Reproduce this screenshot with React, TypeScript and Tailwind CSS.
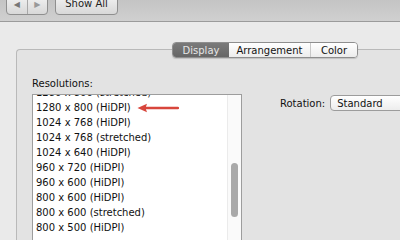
import React from 'react';

const resolutions = [
  '1280 x 800 (stretched)',
  '1280 x 800 (HiDPI)',
  '1024 x 768 (HiDPI)',
  '1024 x 768 (stretched)',
  '1024 x 640 (HiDPI)',
  '960 x 720 (HiDPI)',
  '960 x 600 (HiDPI)',
  '800 x 600 (HiDPI)',
  '800 x 600 (stretched)',
  '800 x 500 (HiDPI)',
];

function RedArrow() {
  return (
    <svg width="42" height="10" viewBox="0 0 42 10" className="ml-[6px] shrink-0">
      <path d="M8 5 H41" stroke="#d8463c" strokeWidth="2.4" strokeLinecap="round" />
      <path d="M0.5 5 L10 0.8 L8.5 5 L10 9.2 Z" fill="#d8463c" />
    </svg>
  );
}

export default function App() {
  return (
    <div className="w-[400px] h-[240px] overflow-hidden bg-[#eaeaea] text-[10px] text-[#111] font-['DejaVu_Sans',sans-serif]">
      {/* toolbar */}
      <div className="h-[22px] flex items-end pb-[6px] bg-gradient-to-b from-[#c4c4c4] to-[#d0d0d0] border-b border-[#9b9b9b]">
        <div className="ml-[6px] w-[42px] h-[20px] flex rounded-[4px] border border-[#8f8f8f] bg-gradient-to-b from-[#f2f2f2] to-[#d8d8d8] text-[#777] text-[8px]">
          <div className="flex-1 flex items-end justify-center pb-[3px] border-r border-[#a8a8a8]">◀</div>
          <div className="flex-1 flex items-end justify-center pb-[3px] text-[#999]">▶</div>
        </div>
        <div className="ml-[7px] w-[63px] h-[20px] flex items-end justify-center pb-[3px] rounded-[4px] border border-[#8f8f8f] bg-gradient-to-b from-[#f2f2f2] to-[#d8d8d8] text-[10px] text-[#222]">
          Show All
        </div>
      </div>

      {/* tabs + panel */}
      <div className="pt-[20px]">
        <div className="relative z-10 ml-[172px] flex h-[16px] w-[186px] rounded-[4px] border border-[#8e8e8e] overflow-hidden shadow-[0_1px_1px_rgba(0,0,0,0.15)]">
          <div className="w-[56px] flex items-center justify-center bg-gradient-to-b from-[#7a7a7a] to-[#666] text-[#e6e6e6]">Display</div>
          <div className="w-[82px] flex items-center justify-center bg-gradient-to-b from-[#ffffff] to-[#ececec] border-r border-[#c8c8c8]">Arrangement</div>
          <div className="flex-1 flex items-center justify-center bg-gradient-to-b from-[#ffffff] to-[#ececec]">Color</div>
        </div>

        <div className="-mt-[9px] ml-[16px] h-[200px] rounded-tl-[4px] border-t border-l border-[#b9b9b9] bg-[#e3e3e3] flex overflow-hidden">
          <div className="shrink-0 pl-[15px] pt-[27px] flex flex-col">
            <div className="leading-[13px]">Resolutions:</div>
            <div className="mt-[4px] w-[210px] h-[160px] border border-[#9d9d9d] bg-white flex overflow-hidden">
              <div className="flex-1 flex flex-col pl-[3px] -mt-[10px]">
                {resolutions.map((r, i) => (
                  <div key={r} className="h-[15px] flex items-center whitespace-nowrap">
                    {r}
                    {i === 1 && <RedArrow />}
                  </div>
                ))}
              </div>
              <div className="w-[14px] border-l border-[#ebebeb] bg-[#fafafa] flex justify-center">
                <div className="mt-[68px] w-[7px] h-[54px] rounded-full bg-[#a9a9a9]" />
              </div>
            </div>
          </div>

          <div className="shrink-0 ml-[38px] pt-[45px] flex items-start">
            <div className="h-[16px] flex items-center">Rotation:</div>
            <div className="ml-[5px] w-[100px] shrink-0 h-[16px] flex items-center pl-[6px] rounded-l-[4px] border border-[#9c9c9c] bg-gradient-to-b from-[#ffffff] to-[#ededed]">
              Standard
            </div>
          </div>
        </div>
      </div>
    </div>
  );
}
